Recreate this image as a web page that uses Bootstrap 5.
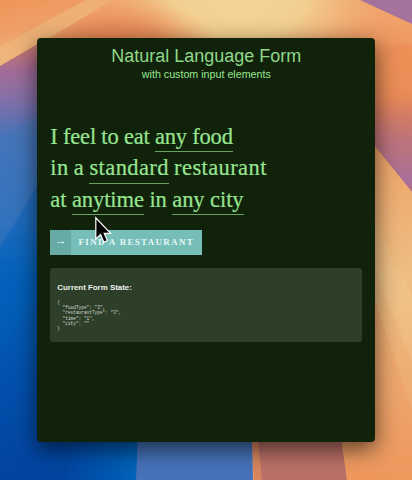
<!DOCTYPE html>
<html lang="en">
<head>
<meta charset="utf-8">
<meta name="viewport" content="width=device-width, initial-scale=1">
<title>Natural Language Form</title>
<link href="https://cdn.jsdelivr.net/npm/bootstrap@5.3.0/dist/css/bootstrap.min.css" rel="stylesheet">
<style>
body{height:480px;background:#ee9b60;font-family:"Liberation Sans",sans-serif}
.wallpaper{z-index:0}
.pane{z-index:1;width:338px;height:404.5px;margin:37.5px 0 0 37.3px;padding:0 13px;background:#10220a;color:#98e592;border-radius:4px;box-shadow:0 7px 22px 1px rgba(0,0,0,.58)}
.title{font-size:18px;line-height:20px;padding-top:8.5px;color:#90d78a}
.subtitle{font-size:10.7px;line-height:14px;margin-top:1px}
.sentence{font-family:"Liberation Serif",serif;font-size:22.5px;line-height:31.4px;margin-top:40px;white-space:nowrap;-webkit-text-stroke:.2px #98e592}
.sentence>div{height:31.4px}
.field{display:inline-block;height:31.4px;border-bottom:1.5px solid #65a561}
.s1{letter-spacing:-.2px}
.s2{letter-spacing:.4px;word-spacing:-.8px}
.s3{letter-spacing:-.08px}
.find{width:151.5px;height:24.5px;margin-top:15px;background:#77beb8;color:#e5f8f5;border-radius:0;font:bold 9px/24px "Liberation Serif",serif;letter-spacing:1.3px}
.find-arrow{width:20.5px;background:#68aaa5}
.state{height:74px;margin:13.5px 0 0;padding:15px 7px 0;border-radius:3px;background:#2d3e29;color:#eef3ed}
.state h2{font-size:7.9px;line-height:10px;margin:0;font-weight:700}
.state pre{font:4.45px/5.15px "Liberation Mono",monospace;margin:7px 0 0;color:#d3dad1;overflow:hidden}
.pointer{left:93px;top:215px;z-index:2}
</style>
<script src="https://cdn.jsdelivr.net/npm/bootstrap@5.3.0/dist/js/bootstrap.bundle.min.js"></script>
</head>
<body class="m-0 position-relative overflow-hidden">
<svg class="wallpaper position-absolute top-0 start-0" width="412" height="480" viewBox="0 0 412 480" aria-hidden="true">
  <defs>
    <linearGradient id="left" x1="0" y1="0" x2="0" y2="1">
      <stop offset="0" stop-color="#cf7c5a"/><stop offset=".07" stop-color="#a66c96"/><stop offset=".14" stop-color="#8270a8"/><stop offset=".22" stop-color="#4a72b8"/><stop offset=".42" stop-color="#2b70c0"/><stop offset=".54" stop-color="#0561bb"/><stop offset=".76" stop-color="#0351ad"/><stop offset="1" stop-color="#0243a0"/>
    </linearGradient>
    <radialGradient id="sun" gradientUnits="userSpaceOnUse" cx="240" cy="-4" r="150" gradientTransform="translate(0 -2) scale(1 .65)">
      <stop offset="0" stop-color="#f4d697"/><stop offset=".45" stop-color="#f2cf90"/><stop offset="1" stop-color="#f2ae74" stop-opacity="0"/>
    </radialGradient>
    <linearGradient id="corner" x1="0" y1="0" x2=".35" y2="1">
      <stop offset="0" stop-color="#ef955a"/><stop offset=".5" stop-color="#efa269"/><stop offset="1" stop-color="#f0c48a"/>
    </linearGradient>
    <linearGradient id="rose" gradientUnits="userSpaceOnUse" x1="0" y1="15" x2="0" y2="205">
      <stop offset="0" stop-color="#ef9a60"/><stop offset=".2" stop-color="#ec8f57"/><stop offset=".42" stop-color="#e58454"/><stop offset=".65" stop-color="#bf7479"/><stop offset=".88" stop-color="#a7709a"/><stop offset="1" stop-color="#c77462"/>
    </linearGradient>
    <linearGradient id="sand" x1="0" y1="0" x2="0" y2="1">
      <stop offset="0" stop-color="#efa368"/><stop offset=".4" stop-color="#eebe82"/><stop offset=".75" stop-color="#eeab70"/><stop offset="1" stop-color="#ef965b"/>
    </linearGradient>
    <linearGradient id="flare" x1="0" y1="0" x2="0" y2="1">
      <stop offset="0" stop-color="#f1c287" stop-opacity=".2"/><stop offset=".5" stop-color="#f1c58a" stop-opacity=".7"/><stop offset="1" stop-color="#f1c287" stop-opacity=".3"/>
    </linearGradient>
    <linearGradient id="blueglow" gradientUnits="userSpaceOnUse" x1="60" y1="0" x2="136" y2="0">
      <stop offset="0" stop-color="#0061b8" stop-opacity="0"/><stop offset="1" stop-color="#0063b9"/>
    </linearGradient>
    <radialGradient id="dusk" gradientUnits="userSpaceOnUse" cx="115" cy="48" r="105" gradientTransform="translate(0 24) scale(1 .5)">
      <stop offset="0" stop-color="#dd7f50"/><stop offset=".45" stop-color="#e58a57" stop-opacity=".9"/><stop offset="1" stop-color="#efa067" stop-opacity="0"/>
    </radialGradient>
    <radialGradient id="ember" gradientUnits="userSpaceOnUse" cx="400" cy="60" r="90" gradientTransform="translate(0 24) scale(1 .6)">
      <stop offset="0" stop-color="#ec8e56"/><stop offset="1" stop-color="#ef9a60" stop-opacity="0"/>
    </radialGradient>
  </defs>
  <path fill="#f0a46c" d="M0 0H412V480H0z"/>
  <path fill="url(#sun)" d="M70 0H412V90H40V36z"/>
  <path fill="url(#dusk)" d="M50 38 113 0H235V50H50z"/>
  <path fill="url(#corner)" d="M0 0H113L0 66z"/>
  <path fill="#efb57b" opacity=".75" d="M60 14 86 0H113L0 66V47z"/>
  <path fill="url(#left)" d="M0 66 48 38H120V480H0z"/>
  <path fill="#3f79bb" opacity=".3" d="M0 135 40 115V180L0 245z"/>
  <path fill="#0062ba" opacity=".35" d="M0 250 40 180V290L0 350z"/>
  <path fill="#0243a0" d="M110 430H140V480H110z"/>
  <path fill="url(#blueglow)" d="M60 430H140V480H60z"/>
  <path fill="#4772ba" d="M138 430H252L253 480H136z"/>
  <path fill="#ba7068" d="M252 430H341L347 480H254z"/>
  <path fill="#ef9559" opacity=".6" d="M252 430H257L262 480H254z"/>
  <path fill="url(#rose)" d="M370 45H412V205L370 150z"/>
  <path fill="url(#ember)" d="M300 0H412V120H300z"/>
  <path fill="#a5719d" d="M360 0H412V24z"/>
  <path fill="url(#sand)" d="M370 140 412 192V480H347L340 430H370z"/>
  <path fill="url(#flare)" d="M375 222 412 296V362L375 270z"/>
  <path fill="#ef9b60" opacity=".35" d="M375 300 412 410V480H375z"/>
</svg>
<main class="pane position-relative">
  <h1 class="title fw-normal text-center mb-0">Natural Language Form</h1>
  <p class="subtitle text-center mb-0">with custom input elements</p>
  <div class="sentence">
    <div class="s1">I feel to eat <span class="field">any food</span></div>
    <div class="s2">in a <span class="field">standard</span> restaurant</div>
    <div class="s3">at <span class="field">anytime</span> in <span class="field">any city</span></div>
  </div>
  <button class="find btn border-0 p-0 d-flex align-items-stretch" type="button">
    <span class="find-arrow d-flex align-items-center justify-content-center">
      <svg width="8" height="5" viewBox="0 0 8 5" fill="none" stroke="#c5e6e2" stroke-width=".8"><path d="M0 2.5H7M5 1.4 7 2.5 5 3.6"/></svg>
    </span>
    <span class="flex-grow-1 text-center">FIND A RESTAURANT</span>
  </button>
  <section class="state">
    <h2>Current Form State:</h2>
    <pre>{
  "foodType": "3",
  "restaurantType": "3",
  "time": "1",
  "city": ""
}</pre>
  </section>
</main>
<svg class="pointer position-absolute" width="22" height="32" viewBox="0 0 22 32" aria-hidden="true">
  <path fill="#000" stroke="#fff" stroke-width="1.2" d="M2.8 2.8V24L7.6 19.6 10.8 27.2 14.4 25.6 11.2 18.4H17.6z"/>
</svg>
</body>
</html>
